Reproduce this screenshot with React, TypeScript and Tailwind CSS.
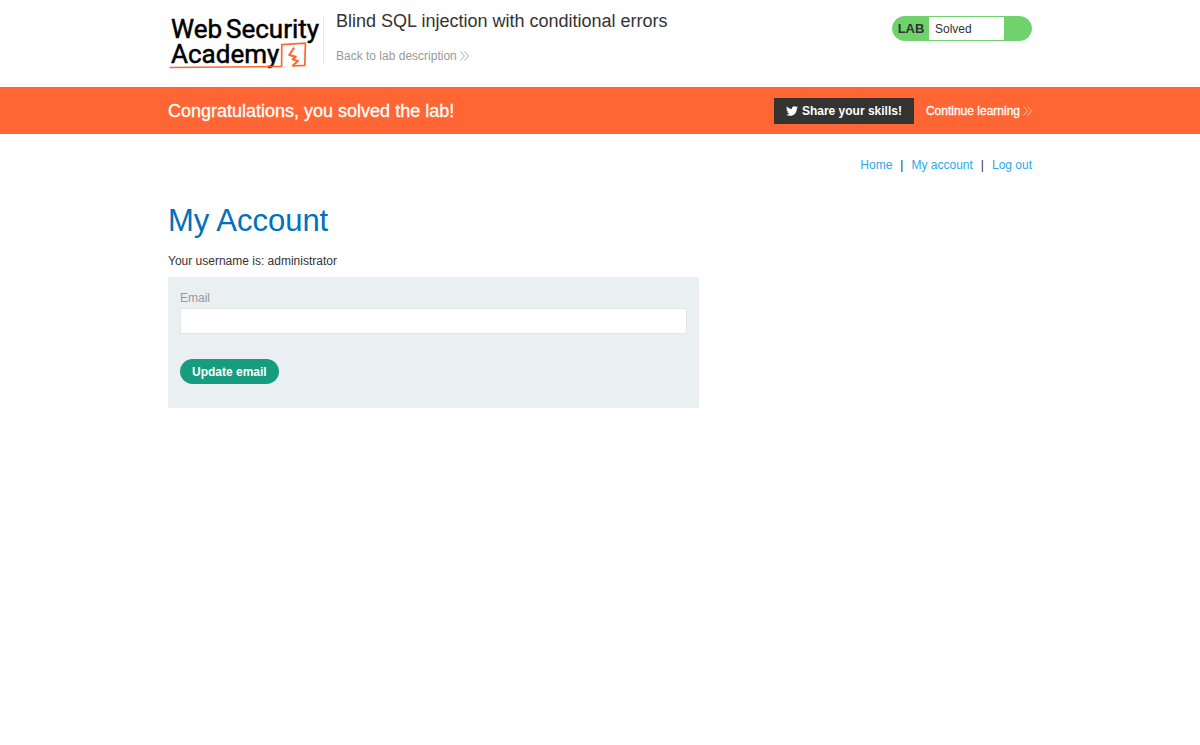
import { FaTwitter } from "react-icons/fa";

function Chevrons({ className }: { className: string }) {
  return (
    <svg
      viewBox="0 0 9 10"
      className={`h-[10px] w-[9px] ${className}`}
      fill="none"
      stroke="currentColor"
      strokeWidth="0.8"
      aria-hidden="true"
    >
      <path d="M0.5 0.5 L4.5 5 L0.5 9.5 M4.5 0.5 L8.5 5 L4.5 9.5" />
    </svg>
  );
}

function Logo() {
  return (
    <svg
      viewBox="0 0 155 54"
      className="h-[54px] w-[155px] shrink-0 overflow-visible"
      role="img"
      aria-label="Web Security Academy"
    >
      <g
        fill="#000"
        stroke="#000"
        strokeWidth="0.5"
        fontFamily="Roboto, 'Liberation Sans', sans-serif"
        fontSize="26"
      >
        <text x="3" y="22">
          Web
        </text>
        <text x="58" y="22">
          Security
        </text>
        <text x="3" y="47">
          Academy
        </text>
      </g>
      <g fill="none" stroke="#ff6633" strokeLinejoin="round">
        <path d="M1.5 51.6 L58 51 L113.6 50.4" strokeWidth="1.5" />
        <path
          d="M113.6 51 L113.8 28.6 L137.4 27.2 L136.8 49.4 L124.6 50"
          strokeWidth="1.7"
        />
        <path
          d="M126.2 31.6 L121.2 39 L127.8 40.8 L124.6 43.4 L130 45 L124.2 50"
          strokeWidth="2"
        />
      </g>
    </svg>
  );
}

function LabHeader() {
  return (
    <header className="mx-auto flex w-18/25 items-start pt-4 pb-[17px]">
      <Logo />
      <div className="h-12 w-px shrink-0 bg-[#ebebeb]" />
      <div className="-mt-2 ml-3 flex-1">
        <h2 className="text-lg leading-[26px] text-[#333332]">
          Blind SQL injection with conditional errors
        </h2>
        <a
          href="#description"
          className="mt-[14px] inline-flex items-center gap-[3px] text-xs text-[#999]"
        >
          Back to lab description
          <Chevrons className="text-[#999]" />
        </a>
      </div>
      <div className="flex h-[25px] w-[140px] shrink-0 items-stretch overflow-hidden rounded-full border border-[#6fd26c] bg-[#6fd26c] text-[#333332]">
        <span className="flex w-9 items-center justify-center text-[13px] font-bold">
          LAB
        </span>
        <span className="flex w-[75px] items-center bg-white pl-[6px] text-xs">
          Solved
        </span>
      </div>
    </header>
  );
}

function SolvedBanner() {
  return (
    <section className="bg-[#ff6633] text-white">
      <div className="mx-auto flex h-[47px] w-18/25 items-center">
        <h4 className="flex-1 text-lg [-webkit-text-stroke:0.3px]">
          Congratulations, you solved the lab!
        </h4>
        <button
          type="button"
          className="flex h-[26px] items-center gap-1 bg-[#333332] px-3 text-xs font-bold"
        >
          <FaTwitter />
          Share your skills!
        </button>
        <a
          href="#learning"
          className="ml-3 flex items-center gap-[3px] text-xs [-webkit-text-stroke:0.3px]"
        >
          Continue learning
          <Chevrons className="text-[#ffd5c6]" />
        </a>
      </div>
    </section>
  );
}

function AccountForm() {
  return (
    <form className="w-[531px] max-w-full bg-[#eaeff2] px-3 pt-[13px] pb-6">
      <label htmlFor="email" className="block text-xs text-[#999]">
        Email
      </label>
      <input
        id="email"
        type="email"
        name="email"
        className="mt-[2px] block h-[26px] w-full border border-[#e4e6e8] bg-white px-2 text-xs outline-none"
      />
      <button
        type="submit"
        className="mt-[25px] block h-[25px] rounded-full bg-[#169c7f] px-3 text-xs font-bold text-white"
      >
        Update email
      </button>
    </form>
  );
}

export default function App() {
  return (
    <div className="min-h-screen bg-white font-['Liberation_Sans',Arial,sans-serif] text-xs text-[#333332] antialiased">
      <LabHeader />
      <SolvedBanner />
      <main className="mx-auto w-18/25">
        <nav className="flex justify-end gap-2 pt-[23px]">
          <a href="#home" className="text-[#29a9e8]">
            Home
          </a>
          <span>|</span>
          <a href="#account" className="text-[#29a9e8]">
            My account
          </a>
          <span>|</span>
          <a href="#logout" className="text-[#29a9e8]">
            Log out
          </a>
        </nav>
        <h1 className="mt-[30px] text-[31px] leading-9 text-[#0071bb]">
          My Account
        </h1>
        <p className="mt-[14px] mb-2">Your username is: administrator</p>
        <AccountForm />
      </main>
    </div>
  );
}
